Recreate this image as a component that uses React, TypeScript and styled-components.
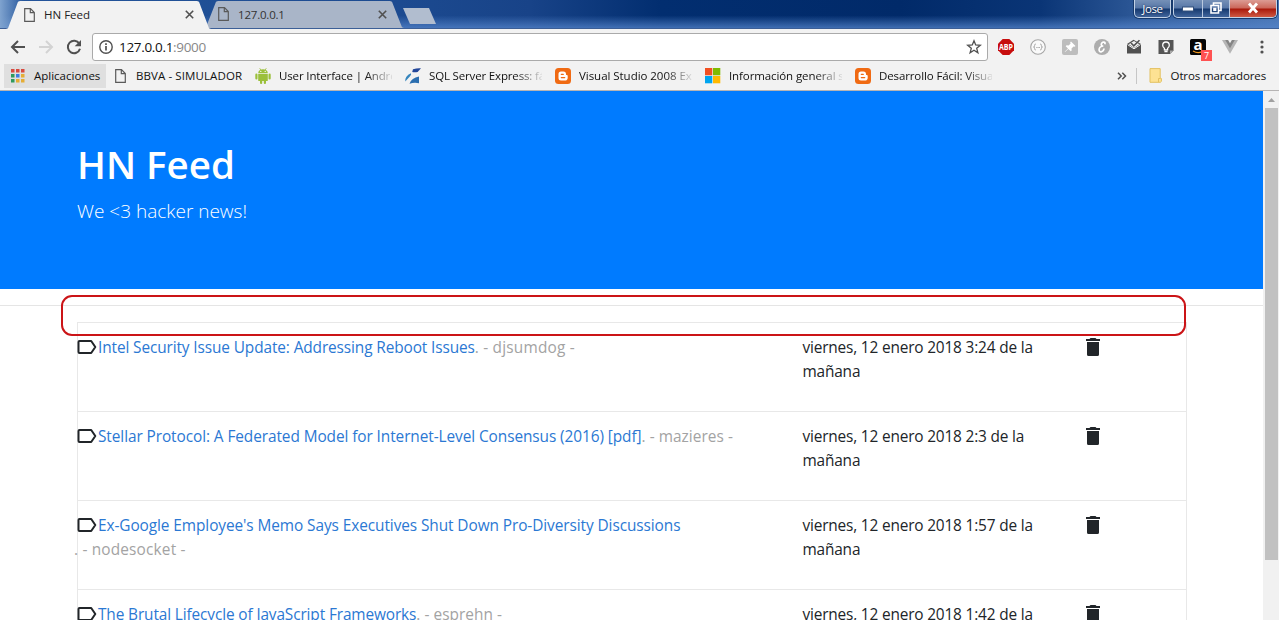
import React from 'react';
import styled, { createGlobalStyle, css } from 'styled-components';

const Global = createGlobalStyle`
  * { box-sizing: border-box; }
  body { margin: 0; overflow: hidden; background: #fff; font-family: "Open Sans", "Noto Sans", sans-serif; }
  svg { display: block; flex: none; overflow: visible; }
`;

const Window = styled.div`
  width: 1279px;
  height: 620px;
  overflow: hidden;
  display: flex;
  flex-direction: column;
`;

const TitleBar = styled.header`
  height: 29px;
  flex: none;
  display: flex;
  justify-content: space-between;
  border-bottom: 1px solid #3c5f97;
  background:
    linear-gradient(90deg, #7fa3cf 0, rgba(90, 134, 192, 0) 24px),
    linear-gradient(180deg, rgba(80, 130, 200, 0) 55%, rgba(84, 132, 202, 0.75) 100%),
    linear-gradient(90deg, #24559b 0, #1c4a90 400px, #184388 530px, #022e70 660px, #012a69 900px, #0a3576 1040px, #2a5594 1130px, #4a76b4 1279px);
`;

const Tabs = styled.div`
  display: flex;
  padding: 1px 0 0 6px;
`;

const Tab = styled.div<{ $active?: boolean; $width: number }>`
  width: ${p => p.$width}px;
  height: ${p => (p.$active ? 28 : 27)}px;
  margin-right: -7px;
  position: relative;
  z-index: ${p => (p.$active ? 2 : 1)};
  display: flex;
  align-items: center;
  padding: 0 17px 1px ${p => (p.$active ? 18 : 14)}px;
  font-size: 11.5px;
  color: ${p => (p.$active ? '#222' : '#333')};
  background: ${p => (p.$active ? '#f2f2f2' : '#a9b5c8')};
  clip-path: polygon(0 100%, 2px 97%, 12px 3%, 14px 0, calc(100% - 14px) 0, calc(100% - 12px) 3%, calc(100% - 2px) 97%, 100% 100%);
`;

const TabTitle = styled.span<{ $spacing?: number }>`
  flex: 1;
  margin-left: 9px;
  letter-spacing: ${p => p.$spacing ?? 0}px;
`;

const NewTab = styled.div`
  width: 33px;
  height: 16px;
  margin: 7px 0 0 6px;
  background: #b1bdcf;
  clip-path: polygon(0 0, 26px 0, 100% 100%, 7px 100%);
`;

const WindowControls = styled.div`
  display: flex;
  gap: 2px;
  padding-right: 2px;
`;

const glass = css`
  border: 1px solid #c3d2e6;
  border-top: 0;
  border-radius: 0 0 5px 5px;
  box-shadow: 0 0 0 1px #173a6d;
  background: linear-gradient(#7590b7 0, #5777a7 8px, #16396f 9px, #41659c 100%);
`;

const UserButton = styled.div`
  ${glass}
  width: 37px;
  height: 18px;
  font-size: 11.5px;
  line-height: 18px;
  letter-spacing: -0.4px;
  text-align: center;
  color: #fff;
  text-shadow: 0 0 2px #001c44;
`;

const ButtonGroup = styled.div`
  ${glass}
  display: flex;
  width: 104px;
  height: 18px;
  overflow: hidden;
`;

const WindowButton = styled.div<{ $width: number; $close?: boolean }>`
  width: ${p => p.$width}px;
  display: flex;
  align-items: center;
  justify-content: center;
  padding-bottom: 2px;
  border-right: ${p => (p.$close ? 0 : 1)}px solid #b9c9df;
  ${p => p.$close && css`background: linear-gradient(#dc9c94 0, #cb675a 8px, #a9190b 9px, #cf5943 100%);`}
`;

const Toolbar = styled.div`
  height: 34px;
  flex: none;
  display: flex;
  align-items: center;
  padding: 4px 1px 2px 4px;
  background: #f2f2f2;
`;

const ToolButton = styled.div<{ $width: number }>`
  width: ${p => p.$width}px;
  height: 28px;
  position: relative;
  flex: none;
  display: flex;
  align-items: center;
  justify-content: center;
`;

const AddressBar = styled.div`
  width: 896px;
  height: 28px;
  margin-left: 4px;
  margin-right: 2px;
  flex: none;
  display: flex;
  align-items: center;
  padding: 0 5px 0 6px;
  background: #fff;
  border: 1px solid #aaa;
  border-radius: 3px;
`;

const Url = styled.span`
  flex: 1;
  margin-left: 6px;
  font-size: 13.5px;
  letter-spacing: -0.32px;
  color: #111;
  span { color: #888; }
`;

const Badge = styled.span`
  position: absolute;
  right: 2px;
  bottom: 0;
  width: 11px;
  height: 11px;
  background: #ff5252;
  color: #fff;
  font-size: 9px;
  line-height: 11px;
  text-align: center;
`;

const BookmarkBar = styled.nav`
  height: 28px;
  flex: none;
  display: flex;
  align-items: center;
  padding: 0 13px 2px 4px;
  background: #f2f2f2;
  border-bottom: 1px solid #b6b4b4;
  font-size: 11.5px;
  color: #111;
`;

const AppsButton = styled.div`
  width: 102px;
  height: 24px;
  display: flex;
  align-items: center;
  gap: 10px;
  padding-left: 6px;
  background: #dfdfdf;
`;

const Bookmark = styled.div<{ $width: number; $spacing?: number }>`
  width: ${p => p.$width}px;
  flex: none;
  display: flex;
  align-items: center;
  gap: 8px;
  white-space: nowrap;
  letter-spacing: ${p => p.$spacing ?? 0}px;
`;

const BookmarkLead = styled.span`
  padding: 0 2px 0 9px;
`;

const Clip = styled.span<{ $fade?: boolean }>`
  width: 113px;
  ${p => p.$fade && css`mask-image: linear-gradient(90deg, #000 86px, transparent 116px);`}
`;

const Overflow = styled.div`
  margin-left: auto;
  padding-right: 9px;
  border-right: 1px solid #c6c6c6;
  height: 16px;
  display: flex;
  align-items: center;
`;

const OtherBookmarks = styled.div`
  display: flex;
  align-items: center;
  gap: 9px;
  margin-left: 12px;
  letter-spacing: -0.12px;
`;

const Viewport = styled.div`
  flex: 1;
  min-height: 0;
  display: flex;
`;

const Page = styled.main`
  flex: 1;
  position: relative;
  overflow: hidden;
  background: #fff;
`;

const Hero = styled.section`
  height: 198px;
  padding: 49px 77px 0;
  background: #007bff;
  color: #fff;
  h1 {
    margin: 0 0 8px;
    font-size: 38.5px;
    line-height: 48px;
    font-weight: 600;
  }
  p {
    margin: 0;
    font-size: 19px;
    line-height: 30px;
    font-weight: 300;
  }
`;

const Rule = styled.hr`
  margin: 16px 0;
  border: 0;
  border-top: 1px solid #e5e5e5;
`;

const Feed = styled.ul`
  list-style: none;
  width: 1110px;
  margin: 0 0 0 77px;
  padding: 0;
  border: 1px solid #e8e8e8;
`;

const Story = styled.li`
  height: 89px;
  display: grid;
  grid-template-columns: 724.5px 270.5px 1fr;
  padding-top: 13px;
  border-bottom: 1px solid #e8e8e8;
  font-size: 15.4px;
  line-height: 24px;
`;

const Title = styled.div`
  display: flex;
  align-items: flex-start;
  white-space: nowrap;
`;

const StoryLink = styled.a<{ $spacing: number }>`
  margin-left: 1px;
  color: #2b78d3;
  letter-spacing: ${p => p.$spacing}px;
`;

const Author = styled.span<{ $spacing: number }>`
  color: #a3a3a3;
  letter-spacing: ${p => p.$spacing}px;
`;

const WrappedAuthor = styled(Author)`
  display: block;
  margin-left: -4px;
`;

const When = styled.div`
  color: #212529;
  letter-spacing: -0.17px;
`;

const Remove = styled.div`
  padding: 2px 0 0 13px;
`;

const Highlight = styled.div`
  position: absolute;
  left: 61px;
  top: 204px;
  width: 1125px;
  height: 41px;
  border: 2px solid #cb1417;
  border-radius: 11px;
`;

const Scrollbar = styled.div`
  width: 16px;
  background: #f1f1f1;
  display: flex;
  flex-direction: column;
  align-items: center;
  padding-left: 1px;
`;

const Arrow = styled.div`
  height: 17px;
  display: flex;
  align-items: center;
`;

const Thumb = styled.div`
  width: 13px;
  height: 452px;
  background: #c1c1c1;
`;

const PageIcon = () => (
  <svg width="11" height="14" viewBox="0 0 11 14" fill="none" stroke="#5a5a5a" strokeWidth="1.2">
    <path d="M.7.7h5.8l3.8 3.8v8.8H.7zM6.3.9v3.8h3.8" />
  </svg>
);

const CloseIcon = () => (
  <svg width="9" height="9" viewBox="0 0 9 9" stroke="#505050" strokeWidth="1.6"><path d="M.8.8l7.4 7.4M8.2.8L.8 8.2" /></svg>
);

const BloggerIcon = () => (
  <svg width="16" height="16" viewBox="0 0 16 16">
    <rect width="16" height="16" rx="3.5" fill="#f06a13" />
    <path d="M6 3.500h2.500a2.500 2.500 0 0 1 2.500 2.500v.4c0 .5.3.7.9.7.5 0 .8.3.8.8v1.800a2.800 2.800 0 0 1-2.800 2.800H6a2.500 2.500 0 0 1-2.500-2.500V6A2.500 2.500 0 0 1 6 3.500z" fill="#fff" />
    <path d="M6.300 6.300h2M6.300 9.600h3.400" stroke="#f06a13" strokeWidth="1.3" strokeLinecap="round" />
  </svg>
);

const AppsIcon = () => {
  const colors = ['#d84a3f', '#d84a3f', '#d84a3f', '#2f9a5d', '#3f7de0', '#e5ad35', '#2f9a5d', '#e5ad35', '#e5ad35'];
  return (
    <svg width="14" height="14" viewBox="0 0 14 14">
      {colors.map((c, i) => <rect key={i} x={1 + (i % 3) * 5} y={Math.floor(i / 3) * 5} width="3.5" height="3.5" fill={c} />)}
    </svg>
  );
};

const AndroidIcon = () => (
  <svg width="16" height="16" viewBox="0 0 16 16" fill="#9bc03b">
    <path d="M3.2 5A4.8 3.8 0 0 1 12.8 5zM3.2 5.8h9.6v6.4a.9.9 0 0 1-.9.9H4.1a.9.9 0 0 1-.9-.9z" />
    <rect x=".3" y="5.6" width="2.2" height="6" rx="1.1" /><rect x="13.5" y="5.6" width="2.2" height="6" rx="1.1" />
    <rect x="5" y="11" width="2.2" height="5" rx="1" /><rect x="8.8" y="11" width="2.2" height="5" rx="1" />
    <path d="M4.7.2l1.2 2M11.3.2l-1.2 2" stroke="#9bc03b" strokeWidth=".8" />
    <circle cx="5.8" cy="3.4" r=".6" fill="#fff" /><circle cx="10.2" cy="3.4" r=".6" fill="#fff" />
  </svg>
);

const SqlIcon = () => (
  <svg width="16" height="16" viewBox="0 0 16 16">
    <path d="M8 1.300Q12 0 16 .3L12.600 4Q9.800 4.600 7.200 4z" fill="#23479a" />
    <path d="M.3 13.500Q-.3 8 6 5.300q.7 1.300-1.200 3.200z" fill="#3585bd" />
    <path d="M4.500 15.700Q6.500 10 14 8.600v6.700q-4.500-1.300-9.500.4z" fill="#2b6eb0" />
  </svg>
);

const MicrosoftIcon = () => (
  <svg width="16" height="16" viewBox="0 0 16 16">
    <path fill="#f25022" d="M0 0h7.300v7.300H0z" /><path fill="#7fba00" d="M8 0h7.300v7.300H8z" />
    <path fill="#00a4ef" d="M0 8h7.300v7.300H0z" /><path fill="#ffb900" d="M8 8h7.300v7.300H8z" />
  </svg>
);

const FolderIcon = () => (
  <svg width="13" height="15" viewBox="0 0 13 15">
    <path d="M1 .6h10.200v9.200l1.200.7v2.900l-1 .9H1z" fill="#fde293" stroke="#e3c161" /><path d="M9.500 14v-3.500h2" fill="none" stroke="#e3c161" />
  </svg>
);

const BackIcon = ({ color, flip }: { color: string; flip?: boolean }) => (
  <svg width="16" height="14" viewBox="0 0 16 14" fill="none" stroke={color} strokeWidth="2">
    <path d={flip ? 'M1 7h13M8 1l6 6-6 6' : 'M15 7H2M8 1L2 7l6 6'} />
  </svg>
);

const ReloadIcon = () => (
  <svg width="16" height="16" viewBox="0 0 16 16">
    <path d="M13.300 4.600A6.200 6.200 0 1 0 14 9.800" fill="none" stroke="#505050" strokeWidth="2" />
    <path d="M15 1v6.300H8.700z" fill="#505050" />
  </svg>
);

const InfoIcon = () => (
  <svg width="14" height="14" viewBox="0 0 14 14" fill="none" stroke="#505050">
    <circle cx="7" cy="7" r="6.200" strokeWidth="1.400" /><path d="M7 6v4.500M7 3.300v1.600" strokeWidth="1.700" />
  </svg>
);

const StarIcon = () => (
  <svg width="16" height="16" viewBox="0 0 16 16" fill="none" stroke="#505050" strokeWidth="1.300">
    <path d="M8 1.700l1.700 4.300 4.600.3-3.600 3 1.200 4.500L8 11.300l-3.900 2.500 1.200-4.500-3.600-3L6.300 6z" />
  </svg>
);

const AdblockIcon = () => (
  <svg width="16" height="16" viewBox="0 0 16 16">
    <path d="M4.700 0h6.600L16 4.700v6.600L11.300 16H4.700L0 11.300V4.700z" fill="#c70d0d" />
    <text x="1" y="10.900" fontSize="8" fontWeight="700" fontFamily="Open Sans, sans-serif" fill="#fff" textLength="14" lengthAdjust="spacingAndGlyphs">ABP</text>
  </svg>
);

const BracesIcon = () => (
  <svg width="16" height="16" viewBox="0 0 16 16" fill="none" stroke="#a5a5a5">
    <circle cx="8" cy="8" r="7.300" fill="#fafafa" strokeWidth="1.100" />
    <path d="M5.800 5q-1.300 0-1.200 1.500Q4.700 8 3.500 8q1.200 0 1.100 1.500Q4.500 11 5.800 11M10.200 5q1.300 0 1.200 1.500Q11.300 8 12.500 8q-1.200 0-1.100 1.500.1 1.500-1.200 1.500" />
    <path d="M6.300 8.500h3.600" strokeDasharray="1 .3" />
  </svg>
);

const PinIcon = () => (
  <svg width="16" height="16" viewBox="0 0 16 16">
    <rect width="16" height="16" rx="2" fill="#bdbdbd" />
    <path d="M9 2.500L13.500 7l-1 .8-1-.3-2 2 .2 2-1 .8L6.400 10 3 13l-.3-.3L6 9.500 3.700 7.200l.9-.9 2 .2 2-2L8.200 3.300z" fill="#fff" />
  </svg>
);

const ScriptIcon = () => (
  <svg width="16" height="16" viewBox="0 0 16 16">
    <circle cx="8" cy="8" r="8" fill="#adadad" />
    <path d="M10.800 5.200Q11.600 3 9.800 3 7.500 3.200 7.300 5.400 7.200 7.100 9.300 7 5.500 7.400 5.100 10.300 5 12.900 7.100 12.800 9.700 12.300 10 9.500" fill="none" stroke="#fff" strokeWidth="1.700" />
  </svg>
);

const InboxIcon = () => (
  <svg width="16" height="16" viewBox="0 0 16 16">
    <path d="M1 5L7.500.8 15 5v9.500H1z" fill="#515151" />
    <path d="M2.700 5.300L8 2l5.300 3.300L8 9z" fill="#f2f2f2" />
    <path d="M5 4l2.800 2.800L13.500 1.200" fill="none" stroke="#515151" strokeWidth="1.600" />
    <path d="M1.500 5.600L8 9.800l6.500-4.200" fill="none" stroke="#f2f2f2" strokeWidth="1" />
  </svg>
);

const KeepIcon = () => (
  <svg width="16" height="16" viewBox="0 0 16 16">
    <path d="M.5 1h15v10.500L12 15H.5z" fill="#555" /><path d="M12 15v-3.500h3.500z" fill="#aaa" />
    <path d="M6.400 9.300Q4.700 8.200 4.700 6.300a3.300 3.300 0 0 1 6.600 0q0 1.900-1.700 3v1.500H6.400zM6.400 12.500h3.200" fill="none" stroke="#fff" strokeWidth="1.300" />
  </svg>
);

const AmazonIcon = () => (
  <svg width="16" height="16" viewBox="0 0 16 16">
    <rect width="16" height="16" rx="1.500" fill="#050505" />
    <text x="8" y="10.500" textAnchor="middle" fontSize="15" fontWeight="700" fontFamily="Open Sans, sans-serif" fill="#fff">a</text>
    <path d="M3 12q5 3 9 .5" fill="none" stroke="#f39a1e" strokeWidth="1.200" />
  </svg>
);

const VueIcon = () => (
  <svg width="16" height="14" viewBox="0 0 16 14">
    <path d="M0 0h5l3 5.200L11 0h5L8 13.800z" fill="#b5b5b5" /><path d="M3.200 0h2.900L8 3.300 9.900 0h2.900L8 8.300z" fill="#858585" />
  </svg>
);

const MenuIcon = () => (
  <svg width="4" height="14" viewBox="0 0 4 14" fill="#505050"><circle cx="2" cy="2" r="1.600" /><circle cx="2" cy="7" r="1.600" /><circle cx="2" cy="12" r="1.600" /></svg>
);

const LabelIcon = () => (
  <svg width="19" height="24" viewBox="0 0 19 24" fill="none" stroke="#212529" strokeWidth="2" strokeLinejoin="round">
    <path d="M1.500 5h11.700L17.300 11l-4.100 6H1.500q-1 0-1-1V6q0-1 1-1z" />
  </svg>
);

const TrashIcon = () => (
  <svg width="14" height="18" viewBox="0 0 14 18" fill="#212529">
    <path d="M0 1h3.500l1-1h5l1 1H14v2H0zM1 4h12v12.500q0 1.500-1.500 1.500h-9Q1 18 1 16.500z" />
  </svg>
);

const extensions = [AdblockIcon, BracesIcon, PinIcon, ScriptIcon, InboxIcon, KeepIcon, AmazonIcon, VueIcon, MenuIcon];

const bookmarks = [
  { icon: AndroidIcon, text: 'User Interface | Andro', spacing: -0.14 },
  { icon: SqlIcon, text: 'SQL Server Express: fá', spacing: -0.16 },
  { icon: BloggerIcon, text: 'Visual Studio 2008 Ex', spacing: -0.04 },
  { icon: MicrosoftIcon, text: 'Información general s', spacing: -0.1 },
  { icon: BloggerIcon, text: 'Desarrollo Fácil: Visua', spacing: -0.12 },
];

const stories = [
  { title: 'Intel Security Issue Update: Addressing Reboot Issues', author: 'djsumdog', time: '3:24', ls: -0.11, as: 0.2 },
  { title: 'Stellar Protocol: A Federated Model for Internet-Level Consensus (2016) [pdf]', author: 'mazieres', time: '2:3', ls: -0.08, as: 0.05 },
  { title: "Ex-Google Employee's Memo Says Executives Shut Down Pro-Diversity Discussions", author: 'nodesocket', time: '1:57', wrap: true, ls: -0.08, as: 0.17 },
  { title: 'The Brutal Lifecycle of JavaScript Frameworks', author: 'esprehn', time: '1:42', ls: -0.12, as: 0.04 },
];

export default function App() {
  return (
    <Window>
      <Global />
      <TitleBar>
        <Tabs>
          <Tab $active $width={205}><PageIcon /><TabTitle>HN Feed</TabTitle><CloseIcon /></Tab>
          <Tab $width={200}><PageIcon /><TabTitle $spacing={-0.2}>127.0.0.1</TabTitle><CloseIcon /></Tab>
          <NewTab />
        </Tabs>
        <WindowControls>
          <UserButton>Jose</UserButton>
          <ButtonGroup>
            <WindowButton $width={29}>
              <svg width="12" height="5" viewBox="0 0 12 5"><rect x=".5" y="2" width="11" height="4" fill="#fff" stroke="#33507d" /></svg>
            </WindowButton>
            <WindowButton $width={27}>
              <svg width="12" height="12" viewBox="0 0 12 12" fill="none" stroke="#fff" strokeWidth="1.600"><path d="M3.500 3V1h7.500v7.500H9M1 3.500h7.500V11H1zM4 6.500h1.600v1.600H4z" /></svg>
            </WindowButton>
            <WindowButton $width={46} $close>
              <svg width="12" height="10" viewBox="0 0 12 10" stroke="#fff" strokeWidth="2.800"><path d="M2 .5l8 9M10 .5l-8 9" /></svg>
            </WindowButton>
          </ButtonGroup>
        </WindowControls>
      </TitleBar>
      <Toolbar>
        <ToolButton $width={28}><BackIcon color="#505050" /></ToolButton>
        <ToolButton $width={28}><BackIcon color="#d3d3d3" flip /></ToolButton>
        <ToolButton $width={28}><ReloadIcon /></ToolButton>
        <AddressBar><InfoIcon /><Url>127.0.0.1<span>:9000</span></Url><StarIcon /></AddressBar>
        {extensions.map((Icon, i) => (
          <ToolButton key={i} $width={32}><Icon />{i === 6 && <Badge>7</Badge>}</ToolButton>
        ))}
      </Toolbar>
      <BookmarkBar>
        <AppsButton><AppsIcon />Aplicaciones</AppsButton>
        <Bookmark $width={149} $spacing={0.1}><BookmarkLead><PageIcon /></BookmarkLead><Clip>BBVA - SIMULADOR</Clip></Bookmark>
        {bookmarks.map(({ icon: Icon, text, spacing }) => (
          <Bookmark key={text} $width={150} $spacing={spacing}><Icon /><Clip $fade>{text}</Clip></Bookmark>
        ))}
        <Overflow>
          <svg width="10" height="8" viewBox="0 0 10 8" fill="none" stroke="#505050" strokeWidth="1.500"><path d="M1 .8L4.200 4 1 7.200M5.300.8L8.500 4 5.300 7.200" /></svg>
        </Overflow>
        <OtherBookmarks><FolderIcon />Otros marcadores</OtherBookmarks>
      </BookmarkBar>
      <Viewport>
        <Page>
          <Hero>
            <h1>HN Feed</h1>
            <p>We &lt;3 hacker news!</p>
          </Hero>
          <Rule />
          <Feed>
            {stories.map(s => (
              <Story key={s.title}>
                <div>
                  <Title>
                    <LabelIcon />
                    <StoryLink $spacing={s.ls}>{s.title}</StoryLink>
                    {!s.wrap && <Author $spacing={s.as}>. - {s.author} -</Author>}
                  </Title>
                  {s.wrap && <WrappedAuthor $spacing={s.as}>. - {s.author} -</WrappedAuthor>}
                </div>
                <When>viernes, 12 enero 2018 {s.time} de la<br />mañana</When>
                <Remove><TrashIcon /></Remove>
              </Story>
            ))}
          </Feed>
          <Highlight />
        </Page>
        <Scrollbar>
          <Arrow><svg width="7" height="4" viewBox="0 0 7 4"><path d="M0 4l3.500-4L7 4z" fill="#a0a0a0" /></svg></Arrow>
          <Thumb />
        </Scrollbar>
      </Viewport>
    </Window>
  );
}
